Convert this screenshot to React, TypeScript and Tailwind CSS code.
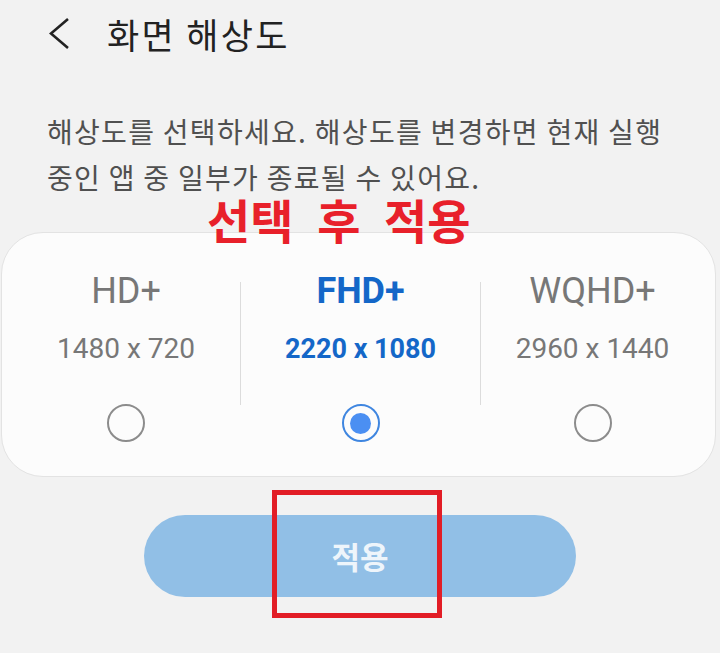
const options = [
  { name: "HD+", size: "1480 x 720", width: "w-[228px]" },
  { name: "FHD+", size: "2220 x 1080", width: "w-[239px]" },
  { name: "WQHD+", size: "2960 x 1440", width: "w-[223px]" },
];

const selected = 1;

function Radio({ on }: { on: boolean }) {
  if (on) {
    return (
      <div className="w-[38px] h-[38px] rounded-full border-2 border-[#3f86e0] flex items-center justify-center">
        <div className="w-[21px] h-[21px] rounded-full bg-[#4b8ff2]" />
      </div>
    );
  }
  return <div className="w-[38px] h-[38px] rounded-full border-2 border-[#8c8c8c]" />;
}

export default function App() {
  return (
    <div className="relative w-[720px] h-[653px] overflow-hidden bg-[#f2f2f2] font-['Roboto','Noto_Sans_CJK_KR',sans-serif]">
      {/* Header */}
      <div className="flex items-center h-[66px] pl-[49px]">
        <svg width="22" height="32" viewBox="0 0 22 32" fill="none">
          <polyline points="19,2 2,16.5 19,31" stroke="#222" strokeWidth="2.6" />
        </svg>
        <h1 className="ml-[36px] text-[35px] leading-none tracking-[2.3px] text-[#222] font-['Noto_Sans_CJK_KR',sans-serif]">
          화면 해상도
        </h1>
      </div>

      {/* Description */}
      <div className="mt-[42px] pl-[47px] text-[28px] leading-[46px] tracking-[1.3px] text-[#505050] font-['Noto_Sans_CJK_KR',sans-serif]">
        <p>해상도를 선택하세요. 해상도를 변경하면 현재 실행</p>
        <p>중인 앱 중 일부가 종료될 수 있어요.</p>
      </div>

      {/* Resolution card */}
      <div className="mt-[32px] ml-[1px] w-[715px] h-[245px] rounded-[42px] bg-[#fcfcfc] border border-[#e3e3e3] px-[10px] flex">
        {options.map((o, i) => (
          <div key={o.name} className="flex">
            {i > 0 && <div className="w-px h-[123px] mt-[49px] bg-[#dcdcdc]" />}
            <div className={`${o.width} flex flex-col items-center pt-[40px]`}>
              <div
                className={
                  i === selected
                    ? "text-[36px] leading-[36px] font-bold text-[#1467c8]"
                    : "text-[36px] leading-[36px] text-[#777]"
                }
              >
                {o.name}
              </div>
              <div
                className={
                  i === selected
                    ? "mt-[26px] text-[27px] leading-[28px] font-bold text-[#1467c8]"
                    : "mt-[26px] text-[28px] leading-[28px] text-[#777]"
                }
              >
                {o.size}
              </div>
              <div className="mt-[41px]">
                <Radio on={i === selected} />
              </div>
            </div>
          </div>
        ))}
      </div>

      {/* Apply button */}
      <div className="mt-[38px] ml-[144px] w-[432px] h-[82px] rounded-full bg-[#91bfe6] flex items-center justify-center">
        <span className="text-[31px] font-bold text-[#eef5fb] font-['Noto_Sans_CJK_KR',sans-serif]">적용</span>
      </div>

      {/* Annotations */}
      <div className="absolute left-[207px] top-[201px] text-[47px] leading-[36px] font-bold text-[#e8202a] [word-spacing:13px] font-['Noto_Sans_CJK_KR',sans-serif]">
        선택 후 적용
      </div>
      <div className="absolute left-[272px] top-[490px] w-[170px] h-[128px] border-[5px] border-[#e21d26]" />
    </div>
  );
}
